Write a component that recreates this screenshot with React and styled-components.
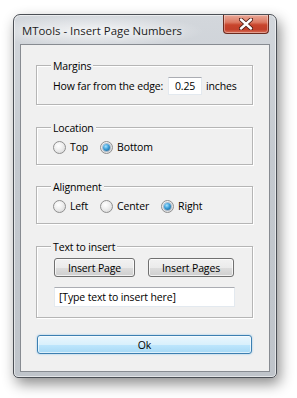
import * as React from "react";
import styled, { createGlobalStyle } from "styled-components";

const GlobalStyle = createGlobalStyle`
  body {
    margin: 0;
    background: #ffffff;
    font-family: "Open Sans", "Noto Sans", sans-serif;
    font-size: 10.5px;
    letter-spacing: -0.15px;
    color: #000000;
  }
`;

const Page = styled.div`
  width: 297px;
  height: 398px;
  padding: 14px 0 0 13px;
  box-sizing: border-box;
  background: #ffffff;
`;

const Window = styled.div`
  width: 264px;
  height: 364px;
  box-sizing: border-box;
  border: 1px solid #4b4f55;
  border-radius: 7px 7px 5px 5px;
  background: linear-gradient(to bottom, #d3d7dc 0%, #c4c9cf 40%, #bfc4ca 100%);
  box-shadow: 3px 6px 14px rgba(0, 0, 0, 0.45), inset 0 0 0 1px rgba(255, 255, 255, 0.55);
  display: flex;
  flex-direction: column;
`;

const TitleBar = styled.div`
  height: 29px;
  display: flex;
  align-items: flex-start;
  justify-content: space-between;
  padding: 0 7px 0 8px;
  background: radial-gradient(ellipse 110px 16px at 80px 16px, rgba(255, 255, 255, 0.75), rgba(255, 255, 255, 0) 100%);
`;

const Title = styled.span`
  font-size: 11.4px;
  letter-spacing: 0;
  line-height: 16px;
  margin-top: 8px;
  white-space: nowrap;
  color: #1c1c1c;
  text-shadow: 0 0 6px rgba(255, 255, 255, 0.9);
`;

const CloseButton = styled.div`
  width: 46px;
  height: 19px;
  box-sizing: border-box;
  border: 1px solid #6b2b1f;
  border-top: none;
  border-radius: 0 0 4px 4px;
  background: linear-gradient(to bottom, #e9a898 0%, #dc7a63 40%, #c8452c 55%, #c2402a 80%, #d9705a 100%);
  box-shadow: inset 0 0 0 1px rgba(255, 255, 255, 0.35);
  display: flex;
  align-items: center;
  justify-content: center;
`;

const Client = styled.div`
  flex: 1;
  margin: 0 6px 5px 6px;
  border: 1px solid #878b91;
  background: #f0f0f0;
  padding: 20px 16px 0 15px;
  display: flex;
  flex-direction: column;
  white-space: nowrap;
`;

const Group = styled.div`
  height: ${(p) => p.$h}px;
  box-sizing: border-box;
  border: 1px solid #b5b5b5;
  box-shadow: inset 1px 1px 0 #ffffff, 1px 1px 0 #ffffff;
  margin-bottom: ${(p) => p.$mb}px;
  padding-left: ${(p) => p.$pl || 16}px;
  display: flex;
  flex-direction: column;
`;

const GroupLabel = styled.span`
  align-self: flex-start;
  margin: -8px 0 0 ${(p) => p.$ml || -2}px;
  padding: 0 2px;
  line-height: 16px;
  height: 16px;
  background: #f0f0f0;
`;

const Row = styled.div`
  display: flex;
  align-items: center;
  margin-top: 3px;
  height: ${(p) => p.$h || 16}px;
  gap: ${(p) => p.$gap || 0}px;
`;

const NumberBox = styled.div`
  width: 34px;
  height: 18px;
  box-sizing: border-box;
  border: 1px solid #e3e9ef;
  border-top-color: #abadb3;
  background: #ffffff;
  margin: 0 4px 0 5px;
  display: flex;
  align-items: center;
  justify-content: center;
`;

const RadioItem = styled.label`
  display: flex;
  align-items: center;
  gap: 4px;
  margin-right: 12px;
`;

const RadioCircle = styled.span`
  width: 13px;
  height: 13px;
  box-sizing: border-box;
  border-radius: 50%;
  border: 1px solid #8f8f8f;
  background: radial-gradient(circle at 40% 35%, #ffffff 0%, #f0f0f0 40%, #d2d2d2 100%);
  display: flex;
  align-items: center;
  justify-content: center;
`;

const RadioDot = styled.span`
  width: 7px;
  height: 7px;
  border-radius: 50%;
  background: radial-gradient(circle at 40% 35%, #a8e3ff 0%, #3b9ed8 45%, #17527f 100%);
  box-shadow: 0 0 0 1px rgba(40, 90, 140, 0.35);
`;

const Button = styled.div`
  width: ${(p) => p.$w}px;
  height: 19px;
  box-sizing: border-box;
  border: 1px solid #707070;
  border-radius: 3px;
  background: linear-gradient(to bottom, #f2f2f2 0%, #ebebeb 50%, #dddddd 51%, #cfcfcf 100%);
  box-shadow: inset 0 0 0 1px rgba(255, 255, 255, 0.7);
  display: flex;
  align-items: center;
  justify-content: center;
`;

const TextInput = styled.div`
  width: 181px;
  height: 20px;
  box-sizing: border-box;
  margin-top: 10px;
  border: 1px solid #e3e9ef;
  border-top-color: #abadb3;
  background: #ffffff;
  padding-left: 4px;
  display: flex;
  align-items: center;
`;

const OkButton = styled.div`
  margin-left: 1px;
  width: 215px;
  height: 19px;
  box-sizing: border-box;
  border: 1px solid #3c7fb1;
  border-radius: 3px;
  background: linear-gradient(to bottom, #eaf6fd 0%, #d9f0fc 50%, #bee6fd 51%, #a7d9f5 100%);
  box-shadow: inset 0 0 0 1px rgba(255, 255, 255, 0.6), 0 0 2px rgba(60, 160, 230, 0.6);
  display: flex;
  align-items: center;
  justify-content: center;
`;

const Radio = ({ label, checked }) => (
  <RadioItem>
    <RadioCircle>{checked && <RadioDot />}</RadioCircle>
    {label}
  </RadioItem>
);

const CloseIcon = () => (
  <svg width="14" height="12" viewBox="0 0 14 12">
    <path d="M2 1.5 L12 10.5 M12 1.5 L2 10.5" stroke="#4a1a12" strokeWidth="4.2" strokeLinecap="round" />
    <path d="M2 1.5 L12 10.5 M12 1.5 L2 10.5" stroke="#ffffff" strokeWidth="2.4" strokeLinecap="round" />
  </svg>
);

export default function App() {
  return (
    <>
      <GlobalStyle />
      <Page>
        <Window>
          <TitleBar>
            <Title>MTools - Insert Page Numbers</Title>
            <CloseButton>
              <CloseIcon />
            </CloseButton>
          </TitleBar>
          <Client>
            <Group $h={40} $mb={22}>
              <GroupLabel>Margins</GroupLabel>
              <Row $h={18}>
                How far from the edge:
                <NumberBox>0.25</NumberBox>
                inches
              </Row>
            </Group>
            <Group $h={38} $mb={21}>
              <GroupLabel>Location</GroupLabel>
              <Row>
                <Radio label="Top" />
                <Radio label="Bottom" checked />
              </Row>
            </Group>
            <Group $h={38} $mb={22}>
              <GroupLabel>Alignment</GroupLabel>
              <Row>
                <Radio label="Left" />
                <Radio label="Center" />
                <Radio label="Right" checked />
              </Row>
            </Group>
            <Group $h={72} $mb={17} $pl={17}>
              <GroupLabel $ml={-3}>Text to insert</GroupLabel>
              <Row $h={19} $gap={13}>
                <Button $w={81}>Insert Page</Button>
                <Button $w={86}>Insert Pages</Button>
              </Row>
              <TextInput>[Type text to insert here]</TextInput>
            </Group>
            <OkButton>Ok</OkButton>
          </Client>
        </Window>
      </Page>
    </>
  );
}
